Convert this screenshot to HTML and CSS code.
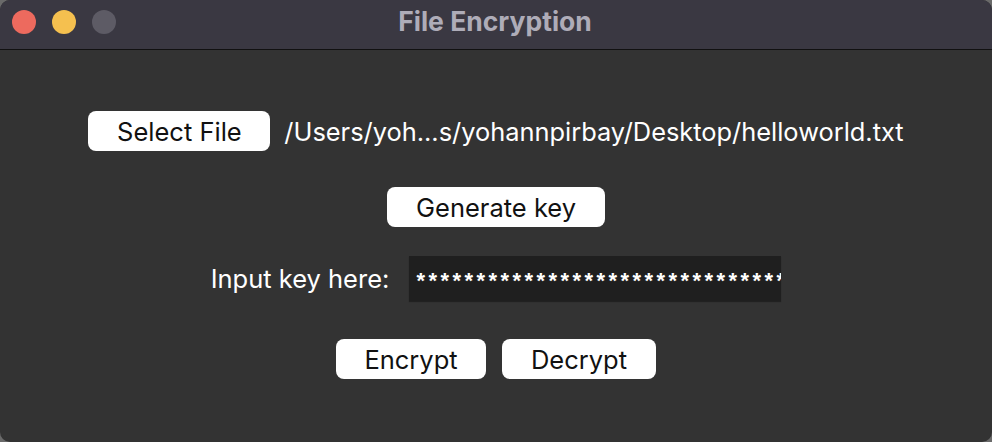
FILE: index.html
```html
<!DOCTYPE html>
<html>
<head>
<meta charset="utf-8">
<link rel="stylesheet" href="styles.css">
</head>
<body>
<div class="window">
  <div class="titlebar">
    <div class="lights">
      <span class="light red"></span>
      <span class="light yellow"></span>
      <span class="light grey"></span>
    </div>
    <div class="title">File Encryption</div>
  </div>
  <div class="content">
    <div class="row row-file">
      <button class="btn btn-select">Select File</button>
      <span class="path">/Users/yoh...s/yohannpirbay/Desktop/helloworld.txt</span>
    </div>
    <div class="row row-gen">
      <button class="btn btn-gen">Generate key</button>
    </div>
    <div class="row row-key">
      <span class="label">Input key here:</span>
      <div class="keybox"><span class="stars">*******************************</span></div>
    </div>
    <div class="row row-actions">
      <button class="btn btn-enc">Encrypt</button>
      <button class="btn btn-dec">Decrypt</button>
    </div>
  </div>
</div>
</body>
</html>
```

FILE: styles.css
```css
* { box-sizing: border-box; }
html, body {
  margin: 0;
  padding: 0;
  width: 992px;
  height: 442px;
  background: #6a6a6a;
  overflow: hidden;
}
.window {
  width: 992px;
  height: 442px;
  border-radius: 10px;
  overflow: hidden;
  background: #333333;
  display: flex;
  flex-direction: column;
  font-family: Inter, "Liberation Sans", sans-serif;
}
.titlebar {
  height: 50px;
  flex: none;
  background: #3a3842;
  border-bottom: 1px solid #111111;
  position: relative;
  display: flex;
  align-items: center;
  justify-content: center;
}
.lights {
  position: absolute;
  left: 12px;
  top: 10px;
  display: flex;
  gap: 16px;
}
.light {
  width: 24px;
  height: 24px;
  border-radius: 50%;
  display: block;
}
.red { background: #ed6a5e; }
.yellow { background: #f5c04f; }
.grey { background: #5d5b65; }
.title {
  color: #aeacb8;
  font-size: 26.5px;
  font-weight: 700;
  margin-top: -8px;
  margin-left: -2px;
}
.content {
  flex: 1;
  display: flex;
  flex-direction: column;
  align-items: center;
  padding-top: 61px;
}
.row {
  display: flex;
  align-items: center;
  justify-content: center;
}
.btn {
  background: #ffffff;
  border: none;
  border-radius: 8px;
  height: 40px;
  font-family: Inter, "Liberation Sans", sans-serif;
  font-size: 25.5px;
  color: #111111;
  padding: 0;
}
.btn-select { width: 182px; }
.path {
  margin-left: 14px;
  color: #ffffff;
  font-size: 25.4px;
  white-space: nowrap;
}
.row-gen { margin-top: 36px; }
.btn-gen { width: 218px; }
.row-key { margin-top: 29px; }
.label {
  color: #ffffff;
  font-size: 25.5px;
  margin-right: 20px;
}
.keybox {
  width: 372px;
  height: 45px;
  background: #1f1f1f;
  box-shadow: 0 1px 1px rgba(0,0,0,0.35);
  overflow: hidden;
  display: flex;
  align-items: center;
  padding-left: 7px;
}
.stars {
  color: #ffffff;
  font-family: "Liberation Sans", sans-serif;
  font-weight: 700;
  font-size: 22px;
  letter-spacing: 3.44px;
  white-space: nowrap;
  margin-top: 4px;
}
.row-actions { margin-top: 38px; gap: 16px; }
.btn-enc { width: 150px; }
.btn-dec { width: 154px; }
```
